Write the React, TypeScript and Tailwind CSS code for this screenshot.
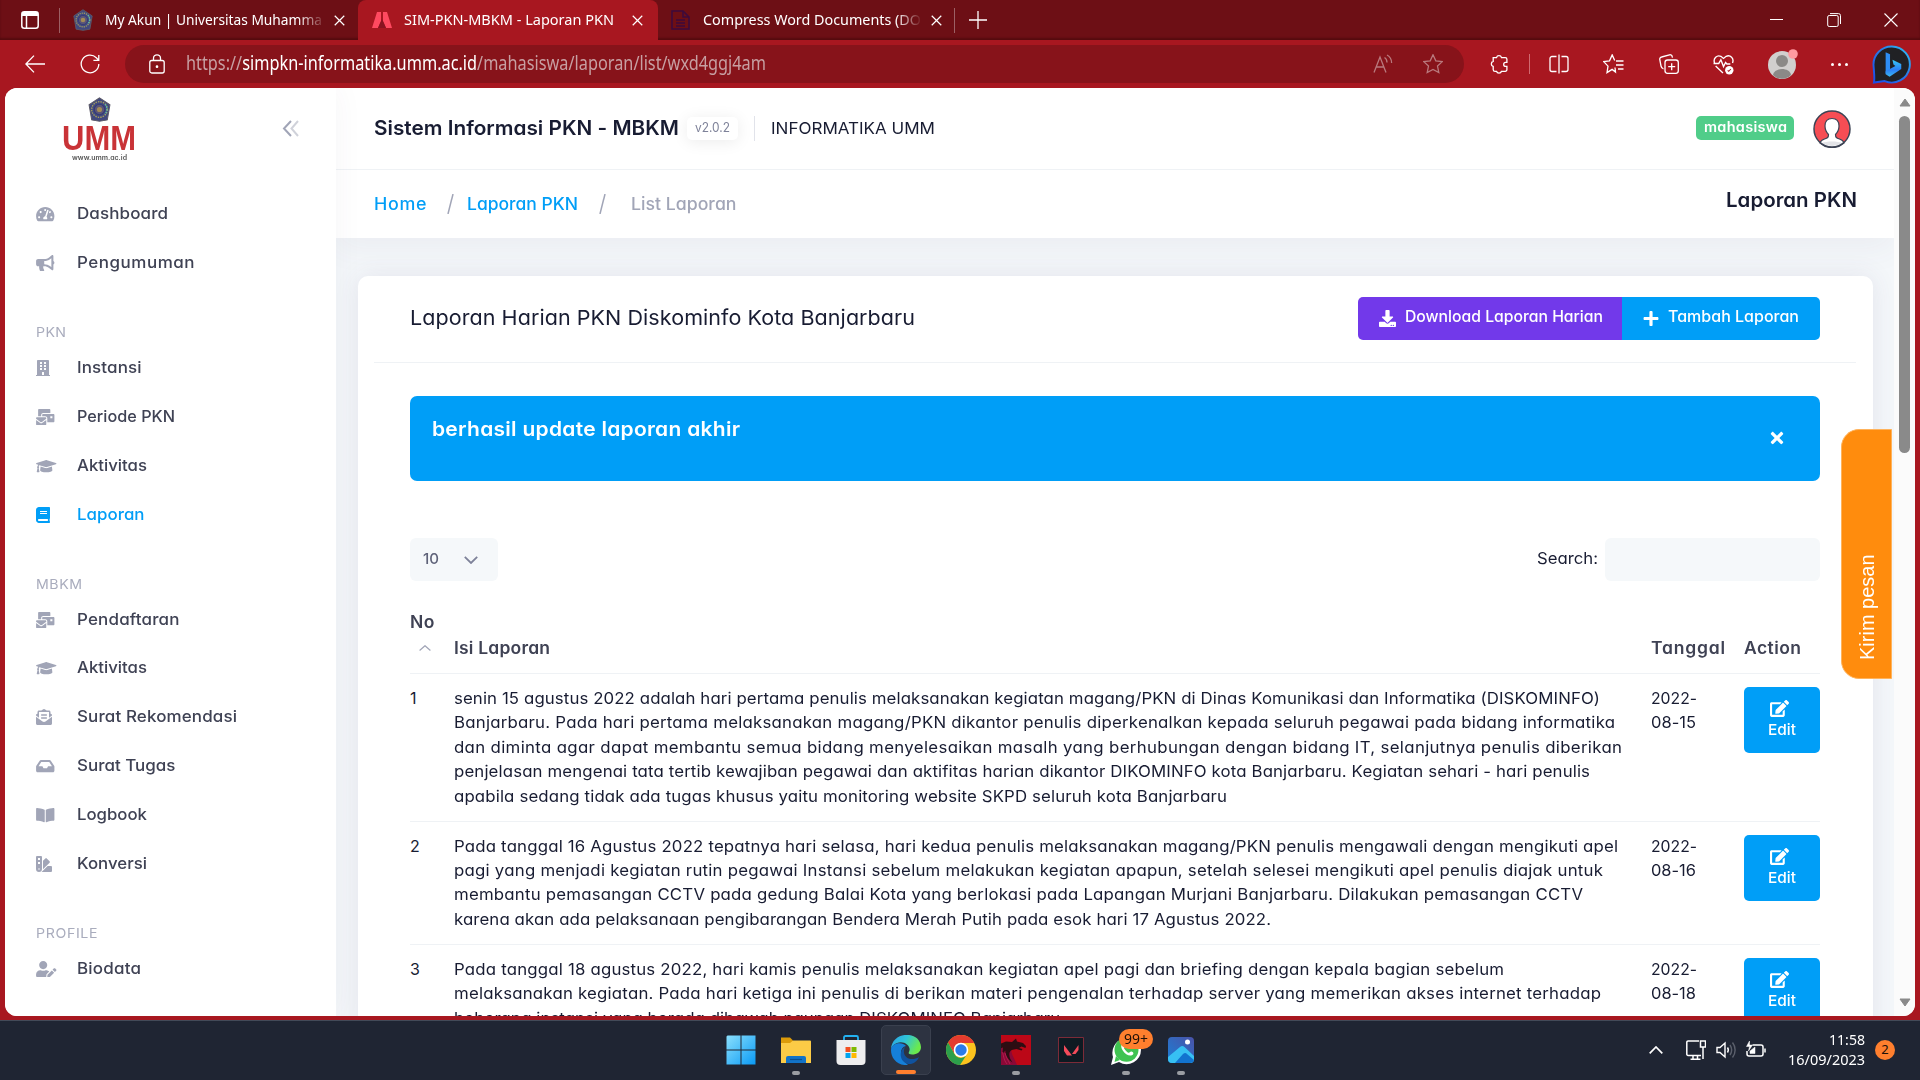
import React, { useLayoutEffect, useRef } from "react";
import {
  FaTachometerAlt, FaBullhorn, FaBuilding, FaMailBulk, FaGraduationCap, FaBook, FaEnvelopeOpenText,
  FaInbox, FaBookOpen, FaSwatchbook, FaUserEdit, FaDownload, FaPlus, FaTimes, FaEdit,
} from "react-icons/fa";

/** Single-line text that spans exactly `w` pixels: glyphs are stretched a little, tracking takes the rest. */
function Fit({ w, className = "", children }: { w: number; className?: string; children: React.ReactNode }) {
  const ref = useRef<HTMLSpanElement>(null);
  useLayoutEffect(() => {
    const el = ref.current!;
    el.style.letterSpacing = "0px";
    el.style.transform = "none";
    const natural = el.getBoundingClientRect().width;
    const n = (el.textContent || "").length;
    const s = Math.min(1.05, Math.max(0.84, w / natural));
    el.style.transform = `scaleX(${s})`;
    if (n > 1) el.style.letterSpacing = (w / s - natural) / (n - 1) + "px";
  }, [w]);
  return (
    <span className={"inline-block whitespace-nowrap " + className} style={{ width: w }}>
      <span ref={ref} className="inline-block origin-left">{children}</span>
    </span>
  );
}

type Item = { t: string; w: number; icon?: React.ReactNode; active?: boolean; head?: boolean };
const i448 = "h-[16px] w-[14px]";
const i512 = "h-[16px] w-[16px]";
const i576 = "h-[16.300px] w-[18.500px]";
const i640 = "h-[16.300px] w-[20.500px]";
const menu: Item[] = [
  { t: "Dashboard", w: 91, icon: <FaTachometerAlt className={i576} /> },
  { t: "Pengumuman", w: 117.5, icon: <FaBullhorn className={i576} /> },
  { t: "PKN", w: 30, head: true },
  { t: "Instansi", w: 64.5, icon: <FaBuilding className={i448} /> },
  { t: "Periode PKN", w: 98, icon: <FaMailBulk className={i576} /> },
  { t: "Aktivitas", w: 70, icon: <FaGraduationCap className={i640} /> },
  { t: "Laporan", w: 67.5, icon: <FaBook className={i448} />, active: true },
  { t: "MBKM", w: 46, head: true },
  { t: "Pendaftaran", w: 102.5, icon: <FaMailBulk className={i576} /> },
  { t: "Aktivitas", w: 70, icon: <FaGraduationCap className={i640} /> },
  { t: "Surat Rekomendasi", w: 160, icon: <FaEnvelopeOpenText className={i512} /> },
  { t: "Surat Tugas", w: 98.5, icon: <FaInbox className={i576} /> },
  { t: "Logbook", w: 70, icon: <FaBookOpen className={i576} /> },
  { t: "Konversi", w: 70, icon: <FaSwatchbook className={i512} /> },
  { t: "PROFILE", w: 61.5, head: true },
  { t: "Biodata", w: 64, icon: <FaUserEdit className={i640} /> },
];

const rows: { no: string; d: string; lines: [string, number][] }[] = [
  { no: "1", d: "08-15", lines: [
    ["senin 15 agustus 2022 adalah hari pertama penulis melaksanakan kegiatan magang/PKN di Dinas Komunikasi dan Informatika (DISKOMINFO)", 1146],
    ["Banjarbaru. Pada hari pertama melaksanakan magang/PKN dikantor penulis diperkenalkan kepada seluruh pegawai pada bidang informatika", 1161],
    ["dan diminta agar dapat membantu semua bidang menyelesaikan masalh yang berhubungan dengan bidang IT, selanjutnya penulis diberikan", 1168],
    ["penjelasan mengenai tata tertib kewajiban pegawai dan aktifitas harian dikantor DIKOMINFO kota Banjarbaru. Kegiatan sehari - hari penulis", 1136],
    ["apabila sedang tidak ada tugas khusus yaitu monitoring website SKPD seluruh kota Banjarbaru", 773],
  ] },
  { no: "2", d: "08-16", lines: [
    ["Pada tanggal 16 Agustus 2022 tepatnya hari selasa, hari kedua penulis melaksanakan magang/PKN penulis mengawali dengan mengikuti apel", 1164],
    ["pagi yang menjadi kegiatan rutin pegawai Instansi sebelum melakukan kegiatan apapun, setelah selesei mengikuti apel penulis diajak untuk", 1149],
    ["membantu pemasangan CCTV pada gedung Balai Kota yang berlokasi pada Lapangan Murjani Banjarbaru. Dilakukan pemasangan CCTV", 1129],
    ["karena akan ada pelaksanaan pengibarangan Bendera Merah Putih pada esok hari 17 Agustus 2022.", 817],
  ] },
  { no: "3", d: "08-18", lines: [
    ["Pada tanggal 18 agustus 2022, hari kamis penulis melaksanakan kegiatan apel pagi dan briefing dengan kepala bagian sebelum", 1050],
    ["melaksanakan kegiatan. Pada hari ketiga ini penulis di berikan materi pengenalan terhadap server yang memerikan akses internet terhadap", 1147],
    ["beberapa instansi yang berada dibawah naungan DISKOMINFO Banjarbaru.", 611],
  ] },
];

function Emblem({ className }: { className: string }) {
  return (
    <svg viewBox="0 0 24 24" className={className}>
      <path d="M12 .8 L22 7.5 L19.5 22 L12 23.3 L4.5 22 L2 7.5Z" fill="#41497f" stroke="#5c5a68" strokeWidth="1" />
      <circle cx="12" cy="12" r="7.5" fill="none" stroke="#a7a05c" strokeWidth="1.3" strokeDasharray="1.4 1" />
      <circle cx="12" cy="12" r="5" fill="#5a5578" stroke="#333a78" strokeWidth="1" />
      <circle cx="12" cy="12" r="2.5" fill="#a38b56" />
      <path d="M17.5 7c2.5 3 2 7-.5 9.5" stroke="#54c2ae" strokeWidth="1.2" strokeDasharray="1.5 1" fill="none" />
    </svg>
  );
}

function X({ className }: { className: string }) {
  return <svg viewBox="0 0 12 12" className={className}><path d="M.8.8l10.4 10.4M11.2.8L.8 11.2" stroke="#fff" strokeWidth="1.3" /></svg>;
}

function TabStrip() {
  return (
    <div className="flex h-10 bg-[#6d0f15] text-[15px] text-white shadow-[inset_0_-2px_2px_rgba(40,0,0,0.35)]">
      <div className="flex w-[358px] items-center pl-[21px]">
        <svg viewBox="0 0 18 18" className="size-[18px]" fill="none" stroke="#fff" strokeWidth="1.5"><rect x=".8" y=".8" width="16.4" height="16.4" rx="2.5" /><path d="M1 3h16" strokeWidth="4" /><path d="M5.5 5v12" /></svg>
        <span className="ml-[20px] h-[25px] w-px bg-[#9c6064]" />
        <Emblem className="ml-[12px] size-[22px]" />
        <div className="mb-px ml-[11px] w-[219px] [mask-image:linear-gradient(90deg,#000_88%,transparent_101%)]"><Fit w={217}>My Akun | Universitas Muhamma</Fit></div>
        <X className="ml-[10px] size-[11px]" />
      </div>
      <div className="flex w-[300px] items-center rounded-t-lg bg-[#a81720] pl-[14px]">
        <svg viewBox="0 0 20 16" className="h-4 w-5"><path d="M5 0h4v9l-3 7H0z" fill="#ff4a60" /><path d="M11 0h4l5 16h-6l-3-7z" fill="#ff4a60" /><path d="M10 7l4 9H6z" fill="#8a1420" /></svg>
        <Fit w={210} className="mb-px ml-[12px]">SIM-PKN-MBKM - Laporan PKN</Fit>
        <X className="ml-[18px] size-[11px]" />
      </div>
      <div className="flex flex-1 items-center pl-[13px]">
        <svg viewBox="0 0 19 20" className="h-5 w-[19px]" fill="none" stroke="#3d0a3c" strokeWidth="1.6"><path d="M1 1h11l6 6v12H1z" /><path d="M12 1v6h6M5 10h9M5 13h9M5 16h9" /></svg>
        <div className="mb-px ml-[13px] w-[219px] [mask-image:linear-gradient(90deg,#000_88%,transparent_100%)]"><Fit w={218}>Compress Word Documents (DO</Fit></div>
        <X className="ml-[9px] size-[11px]" />
        <span className="ml-[12px] h-[25px] w-px bg-[#9c6064]" />
        <svg viewBox="0 0 18 18" className="ml-[14px] size-[18px]"><path d="M9 0v18M0 9h18" stroke="#fff" strokeWidth="1.3" /></svg>
      </div>
      <div className="flex w-[174px] items-center pb-px">
        <span className="flex w-[60px] justify-center"><span className="h-px w-[13px] bg-white" /></span>
        <span className="flex w-[56px] justify-center"><svg viewBox="0 0 14 14" className="size-[14px]" fill="none" stroke="#fff"><rect x=".7" y="2.5" width="10.5" height="11" rx="1.5" /><path d="M3 .6h8.5a2 2 0 012 2V11" /></svg></span>
        <span className="flex w-[58px] justify-center"><svg viewBox="0 0 14 14" className="size-[14px]"><path d="M.5.5l13 13M13.5.5l-13 13" stroke="#fff" strokeWidth="1.1" /></svg></span>
      </div>
    </div>
  );
}

const bi = "size-[20px]";
const star = "M10 .8l2.8 6 6.5.8-4.8 4.5 1.3 6.5L10 15.4l-5.8 3.2 1.3-6.5L.7 7.6l6.5-.8z";
function Toolbar() {
  return (
    <div className="flex h-12 items-center">
      <span className="flex w-[70px] justify-center"><svg viewBox="0 0 20 18" className="h-[18px] w-5" fill="none" stroke="#fff" strokeWidth="1.3"><path d="M9 .6L.9 9 9 17.4M1 9h19" /></svg></span>
      <span className="flex w-[40px] justify-center"><svg viewBox="0 0 20 20" className={bi} fill="none" stroke="#fff" strokeWidth="1.3"><path d="M18.8 10a8.8 8.8 0 11-2.5-6.2L18.5 6M18.8 1v5.300h-5.400" /></svg></span>
      <div className="ml-[15px] flex h-[38px] w-[1339px] shrink-0 items-center rounded-full bg-[#87131a] pl-[24px]">
        <svg viewBox="0 0 16 20" className="h-5 w-4" fill="none" stroke="#fff" strokeWidth="1.3"><rect x=".8" y="6.5" width="14.4" height="12.5" rx="2" /><path d="M4.5 6.5V4.3a3.5 3.5 0 017 0v2.2" /><circle cx="8" cy="12.7" r=".7" fill="#fff" /></svg>
        <Fit w={580} className="mb-px ml-[21px] text-[19px] text-[#c79fa2]">https://<span className="text-white">simpkn-informatika.umm.ac.id</span>/mahasiswa/laporan/list/wxd4ggj4am</Fit>
        <span className="ml-auto flex items-center gap-[30px] pr-[21px]">
          <svg viewBox="0 0 20 20" className={bi} fill="none" stroke="#b9797d" strokeWidth="1.3"><path d="M1 18.5L7 3l6 15.5M3.2 13h7.6M11.5 3.5c1.8 1 2.5 2.8 2.5 5M14 1c3 1.6 4.6 4.5 4.6 8" /></svg>
          <svg viewBox="0 0 20 20" className={bi} fill="none" stroke="#b9797d" strokeWidth="1.3"><path d={star} /></svg>
        </span>
      </div>
      <span className="ml-[7px] flex w-[55px] justify-center"><svg viewBox="0 0 20 20" className={bi} fill="none" stroke="#fff" strokeWidth="1.3"><path d="M4.200 3.600h3.300a2.600 2.600 0 015 0h3.800a1.600 1.600 0 011.600 1.600v3.200h-1.200a2 2 0 100 4h1.200v3.300a1.600 1.600 0 01-1.600 1.600h-3.800a2.600 2.600 0 01-5 0H6a1.800 1.800 0 01-1.800-1.600v-3.300a2.600 2.600 0 010-5z" /></svg></span>
      <span className="ml-[3px] h-5 w-px bg-[#d06a70]" />
      <span className="ml-[1px] flex w-[55px] justify-center"><svg viewBox="0 0 20 20" className={bi} fill="none" stroke="#fff" strokeWidth="1.3"><path d="M7.5 2.5H3A2 2 0 001 4.5v11a2 2 0 002 2h4.5M12.5 2.5H17a2 2 0 012 2v11a2 2 0 01-2 2h-4.500M10 .5v19" /></svg></span>
      <span className="flex w-[55px] justify-center"><svg viewBox="0 0 21 20" className="h-5 w-[21px]" fill="none" stroke="#fff" strokeWidth="1.3"><path d="M12 13.500L12.500 18l-3.400-2.600L4 18.600l1-6.500L.7 7.600l5.800-.8L9.200.9l2.500 5.700M13 7h7.500M13 11h7.500M15 15h5.500" /></svg></span>
      <span className="flex w-[55px] justify-center"><svg viewBox="0 0 20 20" className={bi} fill="none" stroke="#fff" strokeWidth="1.300"><rect x="6" y="6" width="13.300" height="13.300" rx="2.500" /><path d="M12.700 9.200v7M9.200 12.700h7M4.500 15C3 14.500 2.300 13.500 2 12L.8 5.600A2.200 2.200 0 012.600 3L10.500.8a2.200 2.200 0 012.700 1.700l.3 1.200" /></svg></span>
      <span className="flex w-[55px] justify-center"><svg viewBox="0 0 20 20" className="size-[21px]" fill="none" stroke="#fff" strokeWidth="1.300"><path d="M1.500 8.500C-.2 4 4 .6 7.500 2.200L10 4.200l2.500-2C16.500.5 20.300 4 18.600 8.500M.5 9h5l2-3.500L10 12l2-4 1.200 1.500h3.300M2.500 11.500L9.500 18" /><circle cx="15.500" cy="15.500" r="4" fill="#fff" stroke="none" /><path d="M14 15.500l1 1 2-2.200" stroke="#a81720" strokeWidth="1" /></svg></span>
      <span className="ml-[3px] flex w-[57px] justify-center"><svg viewBox="0 0 30 30" className="size-[30px]"><circle cx="14" cy="16" r="14" fill="#d1cfce" /><circle cx="14" cy="12" r="6" fill="#8b8987" /><path d="M5 26c1-8 17-8 18 0-5 5-13 5-18 0z" fill="#8b8987" /><circle cx="25" cy="5" r="4.800" fill="#ff9aa0" /></svg></span>
      <span className="flex w-[56px] justify-center gap-[4px]"><i className="size-[3px] rounded-full bg-white" /><i className="size-[3px] rounded-full bg-white" /><i className="size-[3px] rounded-full bg-white" /></span>
      <span className="ml-[5px] shrink-0"><svg viewBox="0 0 40 40" className="size-[39px]"><defs><linearGradient id="bing" x1="0" y1="1" x2="1" y2="0"><stop offset="0" stopColor="#1b4ae8" /><stop offset=".6" stopColor="#2a7fe8" /><stop offset="1" stopColor="#2bc4f4" /></linearGradient><linearGradient id="bing2" x1="0" y1="0" x2="0" y2="1"><stop offset="0" stopColor="#37c8f5" /><stop offset=".6" stopColor="#2b7ff5" /><stop offset="1" stopColor="#3bb8f0" /></linearGradient></defs><path d="M20 1.500A18.500 18.500 0 11 13 37L2 38.500C3 34 2 28 1.500 20A18.500 18.500 0 0120 1.500z" fill="#202124" stroke="url(#bing)" strokeWidth="2" /><path d="M14 7.500l4.500 2v16l-4.500 4z" fill="#2d8df5" /><path d="M21 15l9 4.500v5l-12 8-4-2.500v-3l10-5.500-2-1.500z" fill="url(#bing2)" /></svg></span>
    </div>
  );
}

function Sidebar() {
  return (
    <aside className="relative z-10 flex w-[331px] shrink-0 flex-col bg-white shadow-[0_0_28px_rgba(82,63,105,0.05)]">
      <div className="flex h-[101px] items-start justify-between pl-[57px] pr-[37px] pt-[9px]">
        <div className="flex w-[74px] flex-col items-center">
          <Emblem className="size-[25px]" />
          <Fit w={74} className="mt-[2px] h-[27px] font-['Liberation_Sans'] text-[35px] font-bold leading-[28px] text-[#c93337]">UMM</Fit>
          <Fit w={55} className="mt-[3px] text-[7px] font-semibold leading-[8px] text-[#555]">www.umm.ac.id</Fit>
        </div>
        <svg viewBox="0 0 17 17" className="mt-[23px] size-[17px]" fill="none" strokeWidth="2"><path d="M9 1L2 8.500 9 16" stroke="#a1a5b7" /><path d="M16 1L9.500 8.500 16 16" stroke="#d0d2da" /></svg>
      </div>
      <nav className="text-[16.2px] font-medium text-[#3f4254]">
        {menu.map((m, i) => m.head ? (
          <div key={i} className="flex h-[56.300px] items-end pb-[0.500px] pl-[31px] text-[13.500px] font-normal leading-[20px] text-[#a9acbd]"><Fit w={m.w}>{m.t}</Fit></div>
        ) : (
          <div key={i} className={m.active ? "flex h-[48.800px] items-center pl-[31px] text-[#009ef7]" : "flex h-[48.800px] items-center pl-[31px]"}>
            <span className={m.active ? "w-[41px] pt-[2px]" : "w-[41px] pt-[2px] text-[#a1a5b7]"}>{m.icon}</span>
            <Fit w={m.w}>{m.t}</Fit>
          </div>
        ))}
      </nav>
    </aside>
  );
}

function Header() {
  return (
    <header className="relative shrink-0 bg-white shadow-[0_10px_30px_rgba(82,63,105,0.06)]">
      <div className="flex h-[82px] items-center border-b border-[#eff2f5] pb-[1px] pl-[38px] pr-[43px] text-[#181c32]">
        <Fit w={305} className="text-[20px] font-semibold">Sistem Informasi PKN - MBKM</Fit>
        <span className="ml-[8px] flex h-[23px] w-[51px] items-center justify-center rounded-[5px] bg-white text-[12.500px] text-[#7e8299] shadow-[0_2px_16px_rgba(0,0,0,0.08)]"><Fit w={35}>v2.0.2</Fit></span>
        <span className="ml-[16px] h-[25px] w-px bg-[#e1e3ea]" />
        <Fit w={164} className="ml-[16px] mt-[1px] text-[16.500px]">INFORMATIKA UMM</Fit>
        <span className="ml-auto flex h-6 w-[98px] items-center justify-center rounded-[5px] bg-[#50cd89] pb-px text-[13.800px] font-semibold text-white"><Fit w={83}>mahasiswa</Fit></span>
        <svg viewBox="0 0 38 38" className="ml-[19px] mt-[2px] size-[38px]"><circle cx="19" cy="19" r="18" fill="#f64d54" /><path d="M19 8.500c5 0 7 3.500 7 7.500s-1.500 6.500-3.500 8.500c0 3 1 3.500 4 4.500s4 2 4.500 4a18 18 0 01-24 0c.5-2 1.500-3 4.500-4s4-1.500 4-4.500c-2-2-3.500-4.500-3.500-8.500s2-7.500 7-7.500z" fill="#fff" stroke="#3d4455" strokeWidth="1.200" /><path d="M9 33c4-2 16-2 20 0a18 18 0 01-20 0z" fill="#e3e4e8" /><circle cx="19" cy="19" r="18" fill="none" stroke="#3d4455" strokeWidth="1.500" /></svg>
      </div>
      <div className="flex h-[68px] items-center pl-[38px] pr-[37px] text-[17px] font-medium text-[#a1a5b7]">
        <Fit w={52.500} className="mt-[2px] text-[#009ef7]">Home</Fit>
        <svg viewBox="0 0 7 20" className="ml-[20px] h-5 w-[7px]"><path d="M6 0L1 20" stroke="#a1a5b7" strokeWidth="1.500" /></svg>
        <Fit w={111} className="ml-[13px] mt-[2px] text-[#009ef7]">Laporan PKN</Fit>
        <svg viewBox="0 0 7 20" className="ml-[21px] h-5 w-[7px]"><path d="M6 0L1 20" stroke="#a1a5b7" strokeWidth="1.500" /></svg>
        <Fit w={105.500} className="ml-[25px] mt-[2px]">List Laporan</Fit>
        <Fit w={131} className="mb-[6px] ml-auto text-[19.500px] font-semibold text-[#181c32]">Laporan PKN</Fit>
      </div>
    </header>
  );
}

function Card() {
  return (
    <section className="relative ml-[22px] mt-[38px] h-[900px] w-[1515px] shrink-0 rounded-[10px] bg-white pl-[52px] pr-[53px] text-[#181c32] shadow-[0_0_25px_rgba(82,63,105,0.1)]">
      <div className="-mx-[36px] flex h-[87px] items-center justify-between border-b border-[#eff2f5] px-[36px] pb-[2px]">
        <Fit w={505} className="text-[20.500px] font-normal">Laporan Harian PKN Diskominfo Kota Banjarbaru</Fit>
        <div className="flex h-[43px] overflow-hidden rounded-[5px] text-[15.300px] font-medium text-white">
          <span className="flex w-[264px] items-center bg-[#7239ea] pb-[2px] pl-[21px]"><FaDownload className="mt-[3px] h-[17px] w-[17px]" /><Fit w={198} className="ml-[9px]">Download Laporan Harian</Fit></span>
          <span className="flex w-[198px] items-center bg-[#009ef7] pb-[2px] pl-[21px]"><FaPlus className="mt-[3px] h-[17px] w-[16px]" /><Fit w={131} className="ml-[9px]">Tambah Laporan</Fit></span>
        </div>
      </div>
      <div className="mt-[33px] flex h-[85px] justify-between rounded-[7px] bg-[#009ef7] pl-[22px] pr-[34px] text-white">
        <Fit w={308} className="mt-[19px] text-[20px] font-semibold leading-7">berhasil update laporan akhir</Fit>
        <FaTimes className="mt-[33px] size-[18px]" />
      </div>
      <div className="mt-[57px] flex h-[43px] items-stretch justify-between">
        <div className="flex w-[88px] items-center rounded-[6px] bg-[#f5f8fa] pl-[13px] text-[14.800px] font-medium text-[#5e6278]"><Fit w={16}>10</Fit><svg viewBox="0 0 14 8" className="ml-[25px] h-2 w-[14px]" fill="none" stroke="#7e8299" strokeWidth="1.800"><path d="M.8.8L7 7l6.200-6.200" /></svg></div>
        <div className="flex items-center text-[16.200px]"><Fit w={61} className="mb-[2px]">Search:</Fit><span className="ml-[7px] h-full w-[215px] rounded-[6px] bg-[#f5f8fa]" /></div>
      </div>
      <div className="grid grid-cols-[44px_1197px_93px_1fr] items-end border-b border-[#eff2f5] pb-[12px] pt-[28px] text-[16.700px] font-semibold leading-[26px] text-[#3f4254]">
        <div><Fit w={24.500}>No</Fit><div className="flex h-[26px] items-center pl-[9px]"><svg viewBox="0 0 12 6" className="h-[6px] w-3" fill="none" stroke="#a1a5b7" strokeWidth="1.200"><path d="M.6 5.500L6 .7l5.400 4.800" /></svg></div></div>
        <Fit w={96}>Isi Laporan</Fit>
        <Fit w={74}>Tanggal</Fit>
        <Fit w={57}>Action</Fit>
      </div>
      {rows.map((r) => (
        <div key={r.no} className="grid grid-cols-[44px_1197px_93px_1fr] border-b border-[#eff2f5] pb-[12.600px] pt-[12px] text-[16px] leading-[24.400px]">
          <div>{r.no}</div>
          <div className="flex flex-col items-start">{r.lines.map(([t, w]) => <Fit key={t} w={w}>{t}</Fit>)}</div>
          <div className="flex flex-col items-start"><Fit w={46}>2022-</Fit><Fit w={45}>{r.d}</Fit></div>
          <div className="mt-px flex h-[66px] w-[76px] flex-col items-center rounded-[5px] bg-[#009ef7] pt-[13px] text-[15px] font-medium leading-5 text-white"><FaEdit className="mr-[6px] h-[17px] w-[19px]" /><Fit w={28} className="mt-[3px]">Edit</Fit></div>
        </div>
      ))}
    </section>
  );
}

function Scrollbar() {
  return (
    <div className="flex w-[21px] shrink-0 flex-col items-center justify-between bg-[#fbfbfb] pb-[9px] pt-[10px]">
      <div className="flex flex-col items-center gap-[9px]">
        <svg viewBox="0 0 12 9" className="h-[9px] w-3"><path d="M6 1l5 7H1z" fill="#8a8a8a" stroke="#8a8a8a" strokeLinejoin="round" /></svg>
        <span className="h-[337px] w-[11px] rounded-full bg-[#8a8a8a]" />
      </div>
      <svg viewBox="0 0 12 9" className="h-[9px] w-3"><path d="M6 8l5-7H1z" fill="#8a8a8a" stroke="#8a8a8a" strokeLinejoin="round" /></svg>
    </div>
  );
}

const apps: { icon: React.ReactNode; bar?: string; tile?: boolean; badge?: string }[] = [
  { icon: <svg viewBox="0 0 30 30" className="size-[30px]"><defs><linearGradient id="win" x1="0" y1="0" x2="1" y2="1"><stop offset="0" stopColor="#8be0fd" /><stop offset="1" stopColor="#0a9af5" /></linearGradient></defs><path d="M1.500.5H14.500v14H.5v-13zM15.500.5H29.500v14h-14zM.5 15.500h14v14H.5zM15.500 15.500h14v14h-14z" fill="url(#win)" /></svg> },
  { icon: <svg viewBox="0 0 30 30" className="size-[30px]"><path d="M0 2.500h9l3 3v6H0z" fill="#dc9b0a" /><path d="M12 5.500h17a1 1 0 011 1V28H0V8h9z" fill="#fccb46" /><path d="M5 28v-5a2 2 0 012-2h16a2 2 0 012 2v5z" fill="#1273c8" /><path d="M9 24.500h12" stroke="#0a4f91" strokeWidth="1.200" /></svg>, bar: "h-1 w-2 bg-[#9a9da3]" },
  { icon: <svg viewBox="0 0 30 30" className="size-[30px]"><path d="M8 6V2.500a1.500 1.500 0 011.500-1.500h11A1.500 1.500 0 0122 2.500V6" stroke="#23b2f2" strokeWidth="1.800" fill="none" /><path d="M.5 5h29v21a4 4 0 01-4 4h-21a4 4 0 01-4-4z" fill="#eeeeef" /><path d="M9.500 12h5v5h-5z" fill="#f25022" /><path d="M15.500 12h5v5h-5z" fill="#7fba00" /><path d="M9.500 18h5v5h-5z" fill="#00a4ef" /><path d="M15.500 18h5v5h-5z" fill="#ffb900" /></svg> },
  { icon: <svg viewBox="0 0 30 30" className="size-[30px]"><defs><linearGradient id="edg" x1="0" y1="0" x2="1" y2=".4"><stop offset="0" stopColor="#2aa0e8" /><stop offset=".5" stopColor="#2fc4d8" /><stop offset="1" stopColor="#6bea4c" /></linearGradient></defs><path d="M0 14C1-4 29-5 30 12c0 5-4 7.500-9 7.500-3 0-4-1-3-2.500 3-6-5-12-12-9C3 9 1 11 0 14z" fill="url(#edg)" /><path d="M0 15C0 8 11 6 15 11c-6 1-7 9-1 16l3 3C6 31 0 23 0 15z" fill="#1580da" /><path d="M14 12c-8 5-4 18 6 17 4-1 7-4 8-7-6 4-14 2-15-4-.3-2 0-4 1-6z" fill="#10529e" /></svg>, tile: true, bar: "h-1 w-5 bg-[#ff7f2e]" },
  { icon: <svg viewBox="0 0 30 30" className="size-[30px]"><circle cx="15" cy="15" r="15" fill="#fcc31e" /><path d="M2 7.500A15 15 0 0128.200 8H15a7 7 0 00-6.500 4.500L8 18z" fill="#e33b2e" /><path d="M2 7.500A15 15 0 0014 30l6.500-10a7 7 0 01-12-1z" fill="#2c9f4b" /><circle cx="15" cy="15" r="7.300" fill="#fff" /><circle cx="15" cy="15" r="5.700" fill="#2b7be9" /></svg> },
  { icon: <svg viewBox="0 0 30 30" className="size-[30px]"><path d="M0 0h30v30H0z" fill="#bc0717" /><path d="M0 13l9-2 2 8 5 11H0z" fill="#8b0937" /><path d="M0 8.500l5-2 6 .5 4-3.500 1 3 6 1.500 3 3-.5 2-4-1.500-2.500 1.500 3.500 1-1 1.500-5-1.500c-4 .5-6 1-7 3.500-1 4 1 7 3 10-5-3-7.500-8-7-12l-3 3 .5-6-3 1z" fill="#2c0d12" /><path d="M1 17c2 3 1 7 5 12M4 18c1 4 3 7 5 11" stroke="#c0265a" strokeWidth=".7" fill="none" /></svg>, bar: "h-1 w-2 bg-[#9a9da3]" },
  { icon: <svg viewBox="0 0 30 30" className="size-[30px]"><path d="M2.500 2.500h25v25h-25z" fill="#0e1a22" stroke="#7c2b38" /><path d="M8 10l8 10.500h-5L8 16zM22.500 10v5l-3 4H16z" fill="#f24b5a" /></svg> },
  { icon: <svg viewBox="0 0 30 30" className="size-[30px]"><path d="M30 14.500A14.500 14.500 0 018 27L0 30 2 22A14.500 14.500 0 1130 14.500z" fill="#fff" /><circle cx="15.500" cy="14.700" r="12" fill="#3fc351" /><path d="M3.500 27l1.500-6 4 4z" fill="#3fc351" /><path d="M11 9c-3 3 3 12 9 11.500 3-.5 3-3 1-3.800s-2 1.500-3.500 1S13 14 13 13s1.500-1 1-2.500S12 8 11 9z" fill="#fff" /></svg>, bar: "h-1 w-2 bg-[#9a9da3]", badge: "99+" },
  { icon: <svg viewBox="0 0 30 30" className="size-[30px]"><defs><linearGradient id="pho" x1="0" y1="1" x2="1" y2="0"><stop offset="0" stopColor="#1b7fd6" /><stop offset="1" stopColor="#4a52a8" /></linearGradient></defs><rect x="2" y="2" width="26" height="26" rx="4" fill="url(#pho)" /><path d="M2 22l12-10c1.500-1.500 3-1.500 4.500 0L28 21v3a4 4 0 01-4 4H6a4 4 0 01-4-4z" fill="#37c0f3" /><path d="M9 28l8-9c1.500-1.500 3-1.500 4 0l7 6c-.5 2-2 3-4 3z" fill="#1273cf" /><circle cx="21.500" cy="7" r="2.500" fill="#fff" /></svg>, bar: "h-1 w-2 bg-[#9a9da3]" },
];

function Taskbar() {
  return (
    <div className="flex h-[60px] shrink-0 border-t border-[#434a58] bg-[#1f2533] text-white">
      <div className="w-[713px]" />
      {apps.map((a, i) => (
        <div key={i} className="flex w-[55px] items-center justify-center pb-[2px]">
          <div className={a.tile ? "relative flex h-[50px] w-[50px] items-center justify-center rounded-[5px] border border-[#3a404e] bg-[#2d3341]" : "relative flex h-[50px] w-[50px] items-center justify-center"}>
            {a.icon}
            {a.bar && <span className={"absolute bottom-0 rounded-full " + a.bar} />}
            {a.badge && <span className="absolute left-[18px] top-[4px] flex h-5 w-[34px] items-center justify-center rounded-full bg-[#ff7f2e] text-[14px] text-[#201008]"><Fit w={24}>{a.badge}</Fit></span>}
          </div>
        </div>
      ))}
      <div className="ml-auto flex items-center pb-[2px] pr-[25px]">
        <svg viewBox="0 0 14 8" className="mr-[23px] h-2 w-[14px]" fill="none" stroke="#fff" strokeWidth="1.700"><path d="M.7 7.300L7 1l6.300 6.300" /></svg>
        <svg viewBox="0 0 20 20" className="mr-[10px] size-5" fill="none" stroke="#fff" strokeWidth="1.500"><path d="M13 1H2a1.200 1.200 0 00-1.200 1.200v12A1.200 1.200 0 002 15.400h13M4.500 19.200h10M7 15.500v3.500M11.500 15.500v3.500M14.500 1h5v6h-5zM17 7v12" /></svg>
        <svg viewBox="0 0 20 20" className="mr-[10px] size-5" fill="none" stroke="#fff" strokeWidth="1.400"><path d="M1 7.500h3L9 3v14l-5-4.500H1zM11.500 7.500c1 1.500 1 3.500 0 5" /><path d="M14 5c2 3 2 7 0 10M16.500 2.500c3.500 4.500 3.500 10.500 0 15" stroke="#5b606c" /></svg>
        <svg viewBox="0 0 20 20" className="mr-[22px] size-5" fill="none" stroke="#fff" strokeWidth="1.500"><path d="M6.500 5H15a2 2 0 012 2v7a2 2 0 01-2 2H3a2 2 0 01-2-2v-3M19 8.500v4" /><path d="M3.500 1L.5 6.500h3L2.500 11l4-6h-3zM4 13.500V11l5-4v6.500z" fill="#fff" strokeWidth=".5" /></svg>
        <div className="mr-[10px] flex flex-col items-end text-[14.300px] leading-5"><Fit w={36}>11:58</Fit><Fit w={77}>16/09/2023</Fit></div>
        <span className="flex size-5 items-center justify-center rounded-full bg-[#ff7f2e] text-[13px] text-[#201008]">2</span>
      </div>
    </div>
  );
}

export default function App() {
  return (
    <div className="flex h-[1080px] w-[1920px] flex-col overflow-hidden bg-[#a81720] font-['Noto_Sans',sans-serif]">
      <TabStrip />
      <Toolbar />
      <div className="relative mx-[5px] flex h-[928px] shrink-0 overflow-hidden rounded-[12px] bg-white font-['Inter',sans-serif] [font-feature-settings:'cv11','calt'_0]">
        <Sidebar />
        <main className="flex min-w-0 flex-1 flex-col overflow-hidden bg-[#f4f7fa]">
          <Header />
          <Card />
        </main>
        <Scrollbar />
        <div className="absolute right-[23px] top-[341px] flex h-[250px] w-[51px] rotate-180 items-center justify-center rounded-r-[18px] border border-[#ffb35c] bg-[#ff8c0d] pb-[107px] font-['Liberation_Sans'] text-[20px] text-white [writing-mode:vertical-rl]"><span>Kirim pesan</span></div>
      </div>
      <div className="h-[4px] shrink-0" />
      <Taskbar />
    </div>
  );
}
